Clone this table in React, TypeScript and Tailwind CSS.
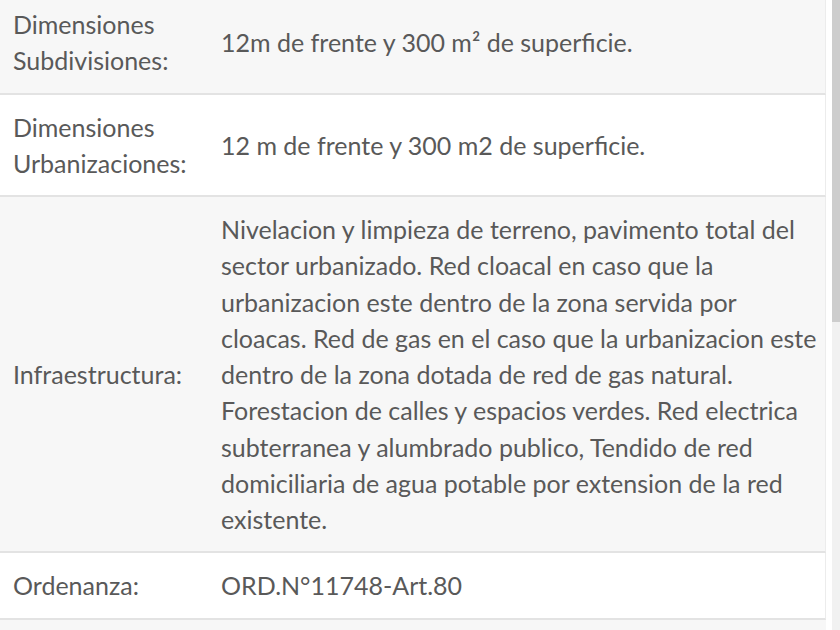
const rows = [
	{
		label: ["Dimensiones", "Subdivisiones:"],
		value: "12m de frente y 300 m² de superficie.",
		striped: true,
	},
	{
		label: ["Dimensiones", "Urbanizaciones:"],
		value: "12 m de frente y 300 m2 de superficie.",
		striped: false,
	},
	{
		label: ["Infraestructura:"],
		value:
			"Nivelacion y limpieza de terreno, pavimento total del sector urbanizado. Red cloacal en caso que la urbanizacion este dentro de la zona servida por cloacas. Red de gas en el caso que la urbanizacion este dentro de la zona dotada de red de gas natural. Forestacion de calles y espacios verdes. Red electrica subterranea y alumbrado publico, Tendido de red domiciliaria de agua potable por extension de la red existente.",
		striped: true,
	},
	{
		label: ["Ordenanza:"],
		value: "ORD.N°11748-Art.80",
		striped: false,
	},
];

export default function App() {
	return (
		<div className="w-[840px] h-[630px] overflow-hidden bg-white flex font-['Lato','Liberation_Sans',sans-serif] text-[25px] leading-[36.25px] text-[#595959]">
			<div className="w-[826px] -mt-[8px] flex flex-col">
				{rows.map((row, i) => (
					<div
						key={i}
						className={`flex items-center border-b-2 border-[#e3e3e3] border-r border-r-[#ececec] ${row.striped ? "bg-[#f7f7f7]" : "bg-white"}`}
					>
						<div className="w-[208px] shrink-0 pl-[13px] pr-[6px] py-[14px]">
							{row.label.map((l) => (
								<div key={l}>{l}</div>
							))}
						</div>
						<div className="flex-1 pl-[13px] pr-[2px] py-[14px]">{row.value}</div>
					</div>
				))}
				<div className="flex-1 min-h-[20px] bg-[#f7f7f7]" />
			</div>
			<div className="w-[6px]" />
			<div className="w-[8px] flex flex-col bg-[#f1f1f1]">
				<div className="h-[322px] bg-[#cdcdcd]" />
			</div>
		</div>
	);
}
